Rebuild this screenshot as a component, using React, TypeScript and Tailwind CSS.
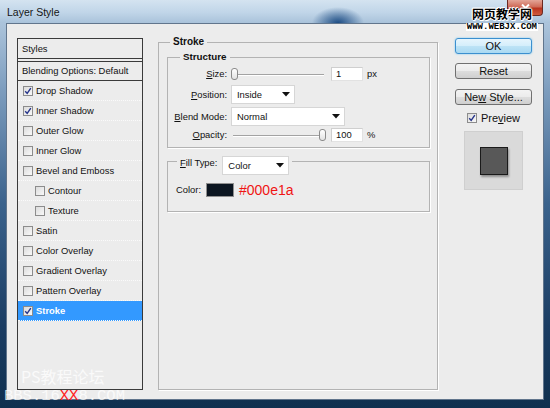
import React from "react";

type StyleItem = {
  label: string;
  checked?: boolean;
  sub?: boolean;
  active?: boolean;
};

const styleItems: StyleItem[] = [
  { label: "Drop Shadow", checked: true },
  { label: "Inner Shadow", checked: true },
  { label: "Outer Glow" },
  { label: "Inner Glow" },
  { label: "Bevel and Emboss" },
  { label: "Contour", sub: true },
  { label: "Texture", sub: true },
  { label: "Satin" },
  { label: "Color Overlay" },
  { label: "Gradient Overlay" },
  { label: "Pattern Overlay" },
  { label: "Stroke", checked: true, active: true },
];

function CheckBox({ checked, size = 10 }: { checked?: boolean; size?: number }) {
  return (
    <span
      className="flex shrink-0 items-center justify-center border border-[#8c8c8c] bg-[linear-gradient(135deg,#dcdcdc,#f8f8f8)]"
      style={{ width: size, height: size }}
    >
      {checked && (
        <svg width={size - 2} height={size - 2} viewBox="0 0 8 8">
          <path d="M1.2 4.2 L3.2 6.4 L6.8 1.2" fill="none" stroke="#26348a" strokeWidth="1.4" />
        </svg>
      )}
    </span>
  );
}

function Arrow() {
  return (
    <svg width="8" height="5" viewBox="0 0 8 5" className="shrink-0">
      <path d="M0 0 H8 L4 4.5 Z" fill="#111" />
    </svg>
  );
}

function Dropdown({ value, width }: { value: string; width: number }) {
  return (
    <div
      className="flex h-[19px] shrink-0 items-center justify-between border border-[#d6d6d6] bg-white pl-[5px] pr-[4px]"
      style={{ width }}
    >
      <span>{value}</span>
      <Arrow />
    </div>
  );
}

function Slider({ value }: { value: number }) {
  return (
    <div className="relative h-[12px] w-[95px] shrink-0">
      <div className="mx-[2px] mt-[6px] h-[2px] border-t border-[#a3a3a3] border-b border-b-white" />
      <div
        className="absolute top-0 h-[12px] w-[7px] rounded-[3px] border border-[#8b8b8b] bg-[linear-gradient(#ffffff,#e2e2e2)]"
        style={{ left: value * 88 }}
      />
    </div>
  );
}

function NumberBox({ value, unit }: { value: string; unit: string }) {
  return (
    <>
      <div className="ml-[5px] flex h-[14px] w-[32px] shrink-0 items-center border border-[#e2e2e2] border-t-[#cfcfcf] border-l-[#cfcfcf] bg-white pl-[4px]">
        {value}
      </div>
      <span className="ml-[4px]">{unit}</span>
    </>
  );
}

function Button({ children, primary }: { children: React.ReactNode; primary?: boolean }) {
  return (
    <div
      className={
        primary
          ? "flex h-[16px] w-[77px] items-center justify-center rounded-[3px] border border-[#3b8fcf] bg-[linear-gradient(#e6f5fd,#d4eefb_50%,#bde3f6_51%,#a9d9f2)] text-[11px] shadow-[0_0_2px_#6fc4f2]"
          : "flex h-[16px] w-[77px] items-center justify-center rounded-[3px] border border-[#707070] bg-[linear-gradient(#f3f3f3,#ebebeb_50%,#dddddd_51%,#cfcfcf)] text-[11px]"
      }
    >
      {children}
    </div>
  );
}

export default function App() {
  return (
    <div className="relative flex h-[408px] w-[550px] flex-col overflow-hidden bg-[linear-gradient(180deg,#bcd1e5_0%,#7d9dbe_22%,#3a628c_50%,#1b3d63_80%,#10304f_100%)] font-['Liberation_Sans',Arial,sans-serif] text-[9.4px] leading-[12px] text-[#111]">
      {/* title bar */}
      <div className="flex h-[23px] shrink-0 items-start bg-[radial-gradient(ellipse_26px_16px_at_338px_23px,#1c4c84,rgba(28,76,132,0)),linear-gradient(180deg,#d4e3f0,#c0d5e8_55%,#a9c2da)] pl-[7px]">
        <span className="mt-[6px] text-[10.5px] leading-[13px] text-[#151515]">Layer Style</span>
        <div className="ml-auto mr-[7px] flex h-[16px] w-[36px] items-center justify-center rounded-b-[4px] border border-t-0 border-[#6b2a22] bg-[linear-gradient(#e3a597,#cf6b58_45%,#b8331f_55%,#cf5a3e)]">
          <svg width="9" height="8" viewBox="0 0 9 8">
            <path d="M1 0.5 L8 7.5 M8 0.5 L1 7.5" stroke="#fff" strokeWidth="2" />
          </svg>
        </div>
      </div>

      {/* client area */}
      <div className="flex min-h-0 flex-1 px-[6px] pb-[8px]">
        <div className="flex flex-1 items-start border border-[#61758c] bg-[#ececec] pl-[10px] pt-[12px]">
          {/* styles list */}
          <div className="mt-[2px] h-[352px] w-[126px] shrink-0 border border-[#3a3a3a] bg-[#ececec]">
            <div className="flex h-[20px] items-center border-b border-[#3a3a3a] pl-[4px]">Styles</div>
            <div className="mt-[2px] flex h-[20px] items-center border-y border-[#3a3a3a] pl-[4px]">
              Blending Options: Default
            </div>
            {styleItems.map((item) => (
              <div
                key={item.label}
                className={
                  item.active
                    ? "flex h-[20px] items-center gap-[3px] border-b border-dotted border-[#fafafa] bg-[#3399ff] font-bold text-white"
                    : "flex h-[20px] items-center gap-[3px] border-b border-dotted border-[#fafafa]"
                }
                style={{ paddingLeft: item.sub ? 17 : 5 }}
              >
                <CheckBox checked={item.checked} />
                <span>{item.label}</span>
              </div>
            ))}
          </div>

          {/* stroke panel */}
          <fieldset className="ml-[15px] h-[354px] w-[280px] shrink-0 border border-[#b3b3b3] pb-0 pl-[8px] pr-[7px] pt-[3px] shadow-[1px_1px_0_#ffffff]">
            <legend className="ml-[3px] px-[3px] text-[10px] font-bold leading-[12px]">Stroke</legend>

            <fieldset className="w-[263px] border border-[#b3b3b3] pb-[5px] pl-0 pr-0 pt-[4px] shadow-[1px_1px_0_#ffffff]">
              <legend className="ml-[12px] px-[3px] text-[9.8px] font-bold leading-[12px]">Structure</legend>

              <div className="flex h-[14px] items-center">
                <span className="w-[59px] shrink-0 text-right">
                  <u>S</u>ize:
                </span>
                <div className="ml-[4px] flex items-center">
                  <Slider value={0} />
                  <NumberBox value="1" unit="px" />
                </div>
              </div>

              <div className="mt-[4px] flex h-[19px] items-center">
                <span className="w-[59px] shrink-0 text-right">
                  <u>P</u>osition:
                </span>
                <div className="ml-[4px]">
                  <Dropdown value="Inside" width={64} />
                </div>
              </div>

              <div className="mt-[3px] flex h-[19px] items-center">
                <span className="w-[59px] shrink-0 text-right">
                  <u>B</u>lend Mode:
                </span>
                <div className="ml-[4px]">
                  <Dropdown value="Normal" width={114} />
                </div>
              </div>

              <div className="mt-[2px] flex h-[14px] items-center">
                <span className="w-[59px] shrink-0 text-right">
                  <u>O</u>pacity:
                </span>
                <div className="ml-[4px] flex items-center">
                  <Slider value={1} />
                  <NumberBox value="100" unit="%" />
                </div>
              </div>
            </fieldset>

            <fieldset className="mt-[9px] w-[263px] border border-[#b3b3b3] pb-[14px] pl-[8px] pr-0 pt-[18px] shadow-[1px_1px_0_#ffffff]">
              <legend className="ml-[1px] flex h-[8px] items-start px-[3px]">
                <span className="leading-[12px]">
                  <u>F</u>ill Type:
                </span>
                <div className="ml-[5px] mt-[-1px]">
                  <Dropdown value="Color" width={67} />
                </div>
              </legend>
              <div className="flex h-[14px] items-center">
                <span>Color:</span>
                <div className="ml-[5px] h-[14px] w-[28px] border border-[#8f8f8f] bg-[#0b1520]" />
                <span className="ml-[5px] text-[14px] leading-[16px] text-[#f01414]">#000e1a</span>
              </div>
            </fieldset>
          </fieldset>

          {/* buttons */}
          <div className="ml-[17px] mt-[2px] flex w-[77px] shrink-0 flex-col items-center">
            <Button primary>OK</Button>
            <div className="mt-[9px]">
              <Button>Reset</Button>
            </div>
            <div className="mt-[10px]">
              <Button>
                <span>
                  Ne<u>w</u> Style...
                </span>
              </Button>
            </div>
            <div className="mt-[7px] flex h-[12px] items-center gap-[4px] text-[11px]">
              <CheckBox checked />
              <span>
                Pre<u>v</u>iew
              </span>
            </div>
            <div className="mt-[7px] flex h-[59px] w-[59px] items-center justify-center border border-[#cfcfcf] bg-[#dadada]">
              <div className="h-[28px] w-[28px] border border-[#1a1a1a] bg-[#585858] shadow-[1px_2px_2px_rgba(0,0,0,0.35)]" />
            </div>
          </div>
        </div>
      </div>

      {/* watermarks */}
      <div className="absolute right-[12px] top-[6px] flex flex-col items-center">
        <span className="font-['Noto_Sans_CJK_SC',sans-serif] text-[12px] font-bold leading-[15px] text-black [text-shadow:1px_0_0_#fff,-1px_0_0_#fff,0_1px_0_#fff,0_-1px_0_#fff,1px_1px_0_#fff,-1px_-1px_0_#fff]">
          网页教学网
        </span>
        <span className="mt-[2px] bg-white px-[1px] font-['Liberation_Mono',monospace] text-[9px] font-bold leading-[8px] text-black">
          WWW.WEBJX.COM
        </span>
      </div>
      <div className="absolute left-[4px] top-[368px] flex flex-col items-start text-[rgba(255,255,255,0.75)]">
        <span className="ml-[17px] font-['Noto_Sans_CJK_SC',sans-serif] text-[16px] leading-[17px]">PS教程论坛</span>
        <span className="mt-[4px] font-['Liberation_Mono',monospace] text-[15.5px] leading-[14px]">
          BBS.16<span className="text-[#ff2222]">XX</span>8.COM
        </span>
      </div>
    </div>
  );
}
